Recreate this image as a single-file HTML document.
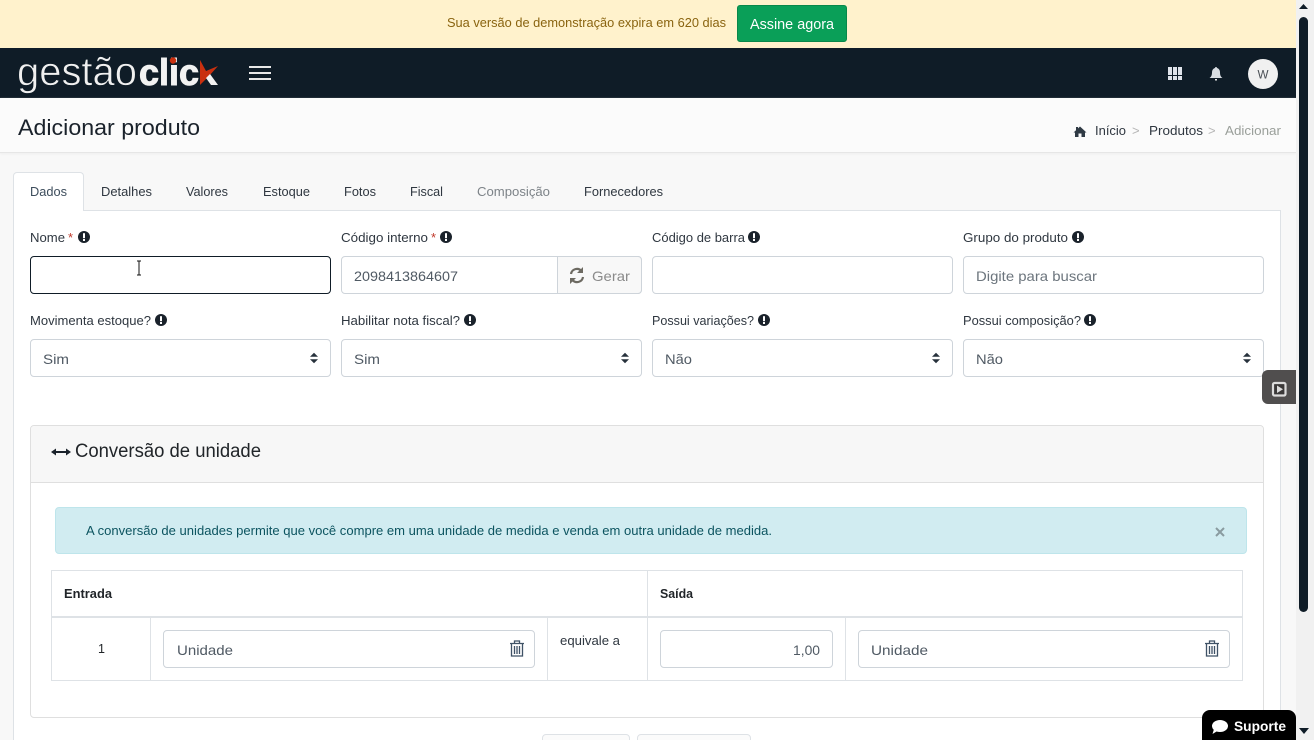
<!DOCTYPE html>
<html lang="pt-BR"><head><meta charset="utf-8"><title>Adicionar produto</title>
<style>
html,body{margin:0;padding:0;width:1314px;height:740px;overflow:hidden;background:#f8f8f8}
#w{position:relative;width:1314px;height:740px;overflow:hidden;background:#f8f8f8}
.b{position:absolute;box-sizing:border-box}
.i{background:#fff;border:1px solid #ced4da;border-radius:4px}
svg{position:absolute;left:0;top:0}
text{font-family:"Liberation Sans",sans-serif;font-size:13px;fill:#2f3740}
.h{fill:#1a222b;font-size:22px}
.m{font-size:14px;fill:#505a64}
</style></head><body><div id="w">
<div class="b" style="left:0;top:0;width:1296px;height:48px;background:#fff2cc"></div>
<div class="b" style="left:737px;top:5px;width:110px;height:37px;background:#0a9f58;border:1px solid #08884a;border-radius:3px"></div>
<div class="b" style="left:0;top:48px;width:1296px;height:50px;background:#0f1c27"></div>
<div class="b" style="left:0;top:98px;width:1296px;height:55px;background:#fbfbfb;border-bottom:1px solid #e6e6e6;box-shadow:0 1px 2px #eee"></div>
<div class="b" style="left:13px;top:210px;width:1268px;height:540px;background:#fff;border:1px solid #dee2e6"></div>
<div class="b" style="left:13px;top:172px;width:71px;height:39px;background:#fff;border:1px solid #dee2e6;border-bottom:0;border-radius:4px 4px 0 0"></div>
<div class="b" style="left:30px;top:256px;width:301px;height:38px;background:#fff;border:1px solid #0f1c27;border-radius:4px"></div>
<div class="b i" style="left:341px;top:256px;width:301px;height:38px"></div>
<div class="b" style="left:557px;top:256px;width:85px;height:38px;background:#f8f8f8;border:1px solid #ced4da;border-radius:0 4px 4px 0"></div>
<div class="b i" style="left:652px;top:256px;width:301px;height:38px"></div>
<div class="b i" style="left:963px;top:256px;width:301px;height:38px"></div>
<div class="b i" style="left:30px;top:339px;width:301px;height:38px"></div>
<div class="b i" style="left:341px;top:339px;width:301px;height:38px"></div>
<div class="b i" style="left:652px;top:339px;width:301px;height:38px"></div>
<div class="b i" style="left:963px;top:339px;width:301px;height:38px"></div>
<div class="b" style="left:30px;top:425px;width:1234px;height:293px;background:#fff;border:1px solid #dfdfdf;border-radius:4px"></div>
<div class="b" style="left:31px;top:426px;width:1232px;height:57px;background:#f7f7f7;border-bottom:1px solid #dfdfdf;border-radius:4px 4px 0 0"></div>
<div class="b" style="left:55px;top:507px;width:1192px;height:47px;background:#d1ecf1;border:1px solid #bee5eb;border-radius:4px"></div>
<div class="b" style="left:51px;top:570px;width:1192px;height:111px;border:1px solid #dee2e6"></div>
<div class="b" style="left:52px;top:616px;width:1190px;height:2px;background:#dee2e6"></div>
<div class="b" style="left:647px;top:571px;width:1px;height:109px;background:#dee2e6"></div>
<div class="b" style="left:150px;top:618px;width:1px;height:62px;background:#dee2e6"></div>
<div class="b" style="left:547px;top:618px;width:1px;height:62px;background:#dee2e6"></div>
<div class="b" style="left:845px;top:618px;width:1px;height:62px;background:#dee2e6"></div>
<div class="b i" style="left:163px;top:630px;width:372px;height:38px"></div>
<div class="b i" style="left:660px;top:630px;width:173px;height:38px"></div>
<div class="b i" style="left:858px;top:630px;width:372px;height:38px"></div>
<div class="b" style="left:542px;top:734px;width:88px;height:20px;background:#fbfbfb;border:1px solid #dee2e6;border-radius:4px"></div>
<div class="b" style="left:637px;top:734px;width:114px;height:20px;background:#fbfbfb;border:1px solid #dee2e6;border-radius:4px"></div>
<div class="b" style="left:1262px;top:370px;width:34px;height:34px;background:#504e4e;border-radius:6px 0 0 6px"></div>
<div class="b" style="left:1202px;top:710px;width:94px;height:30px;background:#000;border-radius:8px 8px 0 0"></div>
<div class="b" style="left:1296px;top:0;width:18px;height:740px;background:#f1f1f1"></div>
<div class="b" style="left:1299px;top:17px;width:9px;height:595px;background:#0f1c27;border-radius:5px"></div>

<svg width="1314" height="740" viewBox="0 0 1314 740" xmlns="http://www.w3.org/2000/svg">
<defs>
<g id="ex"><circle r="6" fill="#1a222b"/><rect x="-1" y="-3.8" width="2" height="5" fill="#fff"/><rect x="-1" y="2" width="2" height="2" fill="#fff"/></g>
<path id="sel" d="M-4-1.200 0-5.200 4-1.200ZM-4 1.200 0 5.200 4 1.200Z" fill="#26313b"/>
<g id="tr" fill="none" stroke="#3f5266" stroke-width="1.300"><path d="M-7-5.500H7M-2.500-5.500V-8H2.500V-5.500"/><path d="M-5.500-5V7H5.500V-5"/><path d="M-2.500-3V5M0-3V5M2.500-3V5"/></g>
</defs>
<text x="447" y="27" textLength="279" lengthAdjust="spacingAndGlyphs" style="fill:#8a6410">Sua versão de demonstração expira em 620 dias</text>
<text x="750" y="29" textLength="84" lengthAdjust="spacingAndGlyphs" style="fill:#fff;font-size:15px">Assine agora</text>

<text x="17" y="85" textLength="120" lengthAdjust="spacingAndGlyphs" style="fill:#f0f0f0;font-size:40px;stroke:#0f1c27;stroke-width:.7">gestão</text>
<text x="139" y="85" textLength="60" lengthAdjust="spacingAndGlyphs" style="fill:#f2f2f2;font-size:37px;font-weight:bold;stroke:#f2f2f2;stroke-width:1">clic</text>
<circle cx="173" cy="60.500" r="3.200" fill="#c9300f"/>
<path d="M200 60 206 71 218 66 209 76 200 85Z" fill="#c9300f"/><path d="M206 78 210 74 218 85H211Z" fill="#f2f2f2"/>
<path d="M249 67H271M249 73H271M249 79H271" stroke="#e8e8e8" stroke-width="2"/>
<rect x="1168" y="67" width="14" height="13" fill="#dfe3ea"/><path d="M1172.500 67V80M1177.500 67V80M1168 75.500H1182" stroke="#0f1c27" stroke-width="1"/>
<path d="M1216 67c-.8 0-1 .6-1 1-2 .6-3 2.400-3 4.500 0 3-1 4.500-2.500 5.500H1222.500c-1.500-1-2.500-2.500-2.500-5.500 0-2.100-1-3.900-3-4.500 0-.4-.2-1-1-1Z" fill="#d8dde2"/><rect x="1215" y="79" width="2" height="1.500" fill="#e6e6e6"/>
<circle cx="1263" cy="74" r="15" fill="#f0f0f0"/>
<text x="1257.500" y="78.500" textLength="11" lengthAdjust="spacingAndGlyphs" style="font-size:12px;fill:#4a4f55">W</text>

<text class="h" x="18" y="135" textLength="182" lengthAdjust="spacingAndGlyphs">Adicionar produto</text>
<path d="M1080 126.500 1086.500 132.500H1085V137H1081.500V133.500H1078.500V137H1075V132.500H1073.500L1076 130.200V127H1078V128.400Z" fill="#2f3a44"/>
<text x="1095" y="135" textLength="31" lengthAdjust="spacingAndGlyphs">Início</text>
<text x="1132" y="135" style="fill:#b5b5b5">&gt;</text>
<text x="1149" y="135" textLength="54" lengthAdjust="spacingAndGlyphs">Produtos</text>
<text x="1208" y="135" style="fill:#b5b5b5">&gt;</text>
<text x="1225" y="135" textLength="56" lengthAdjust="spacingAndGlyphs" style="fill:#9a9f9a">Adicionar</text>

<text x="30" y="196" textLength="37" lengthAdjust="spacingAndGlyphs" style="fill:#3d4d5c">Dados</text>
<text x="101" y="196" textLength="51" lengthAdjust="spacingAndGlyphs">Detalhes</text>
<text x="186" y="196" textLength="42" lengthAdjust="spacingAndGlyphs">Valores</text>
<text x="263" y="196" textLength="47" lengthAdjust="spacingAndGlyphs">Estoque</text>
<text x="344" y="196" textLength="32" lengthAdjust="spacingAndGlyphs">Fotos</text>
<text x="410" y="196" textLength="33" lengthAdjust="spacingAndGlyphs">Fiscal</text>
<text x="477" y="196" textLength="73" lengthAdjust="spacingAndGlyphs" style="fill:#7d8388">Composição</text>
<text x="584" y="196" textLength="79" lengthAdjust="spacingAndGlyphs">Fornecedores</text>

<text x="30" y="242" textLength="35" lengthAdjust="spacingAndGlyphs">Nome</text><text x="68" y="242" style="fill:#c0392b">*</text><use href="#ex" x="84" y="237"/>
<text x="341" y="242" textLength="87" lengthAdjust="spacingAndGlyphs">Código interno</text><text x="431" y="242" style="fill:#c0392b">*</text><use href="#ex" x="446" y="237"/>
<text x="652" y="242" textLength="93" lengthAdjust="spacingAndGlyphs">Código de barra</text><use href="#ex" x="754" y="237"/>
<text x="963" y="242" textLength="105" lengthAdjust="spacingAndGlyphs">Grupo do produto</text><use href="#ex" x="1078" y="237"/>
<text x="30" y="325" textLength="121" lengthAdjust="spacingAndGlyphs">Movimenta estoque?</text><use href="#ex" x="161" y="320"/>
<text x="341" y="325" textLength="119" lengthAdjust="spacingAndGlyphs">Habilitar nota fiscal?</text><use href="#ex" x="470" y="320"/>
<text x="652" y="325" textLength="102" lengthAdjust="spacingAndGlyphs">Possui variações?</text><use href="#ex" x="764" y="320"/>
<text x="963" y="325" textLength="118" lengthAdjust="spacingAndGlyphs">Possui composição?</text><use href="#ex" x="1090" y="320"/>

<path d="M137 261H141M137 275H141M139 261V275" stroke="#111" stroke-width="1" fill="none"/>
<text class="m" x="354" y="281" textLength="104" lengthAdjust="spacingAndGlyphs">2098413864607</text>
<text class="m" x="592" y="281" textLength="38" lengthAdjust="spacingAndGlyphs" style="fill:#8a8a8a">Gerar</text>
<g fill="none" stroke="#6d6a62" stroke-width="2.200"><path d="M571 274a6 6 0 0 1 10.500-3"/><path d="M583 277a6 6 0 0 1-10.500 3"/></g>
<path d="M583 267V273H577ZM570 284V278H576Z" fill="#6d6a62"/>
<text class="m" x="976" y="281" textLength="121" lengthAdjust="spacingAndGlyphs" style="fill:#6c757d">Digite para buscar</text>
<text class="m" x="43" y="364" textLength="26" lengthAdjust="spacingAndGlyphs">Sim</text><use href="#sel" x="314" y="358"/>
<text class="m" x="354" y="364" textLength="26" lengthAdjust="spacingAndGlyphs">Sim</text><use href="#sel" x="625" y="358"/>
<text class="m" x="665" y="364" textLength="27" lengthAdjust="spacingAndGlyphs">Não</text><use href="#sel" x="936" y="358"/>
<text class="m" x="976" y="364" textLength="27" lengthAdjust="spacingAndGlyphs">Não</text><use href="#sel" x="1247" y="358"/>

<path d="M53 452H69" stroke="#1a222b" stroke-width="2"/><path d="M56 448.500 51 452 56 455.500ZM66 448.500 71 452 66 455.500Z" fill="#1a222b"/>
<text x="75" y="457" textLength="186" lengthAdjust="spacingAndGlyphs" style="font-size:19px;fill:#212529">Conversão de unidade</text>
<text x="86" y="535" textLength="686" lengthAdjust="spacingAndGlyphs" style="fill:#0c5460">A conversão de unidades permite que você compre em uma unidade de medida e venda em outra unidade de medida.</text>
<path d="M1216 528 1224 536M1224 528 1216 536" stroke="#8a9ba0" stroke-width="2"/>

<text x="64" y="598" textLength="48" lengthAdjust="spacingAndGlyphs" style="font-weight:bold;fill:#212529">Entrada</text>
<text x="660" y="598" textLength="33" lengthAdjust="spacingAndGlyphs" style="font-weight:bold;fill:#212529">Saída</text>
<text x="98" y="653" style="fill:#212529;font-size:12.500px">1</text>
<text class="m" x="177" y="655" textLength="56" lengthAdjust="spacingAndGlyphs">Unidade</text>
<use href="#tr" x="517" y="649"/>
<text x="560" y="645" textLength="60" lengthAdjust="spacingAndGlyphs">equivale a</text>
<text class="m" x="793" y="655" textLength="27" lengthAdjust="spacingAndGlyphs">1,00</text>
<text class="m" x="871" y="655" textLength="57" lengthAdjust="spacingAndGlyphs">Unidade</text>
<use href="#tr" x="1212" y="649"/>

<rect x="1273" y="383" width="12.500" height="12.500" rx="1.500" fill="#3a3838" stroke="#dcdcdc" stroke-width="2.200"/><path d="M1277 385.500 1283 389.300 1277 393Z" fill="#dcdcdc"/>
<ellipse cx="1220" cy="726" rx="8" ry="6" fill="#fff"/><path d="M1214 729 1212.500 734 1219 730Z" fill="#fff"/>
<text x="1234" y="731" textLength="52" lengthAdjust="spacingAndGlyphs" style="fill:#fff;font-weight:bold;font-size:13.500px">Suporte</text>
<path d="M1303.500 4 1308 9H1299ZM1299 728H1309L1304 734Z" fill="#0f1c27"/>
</svg>
</div></body></html>
